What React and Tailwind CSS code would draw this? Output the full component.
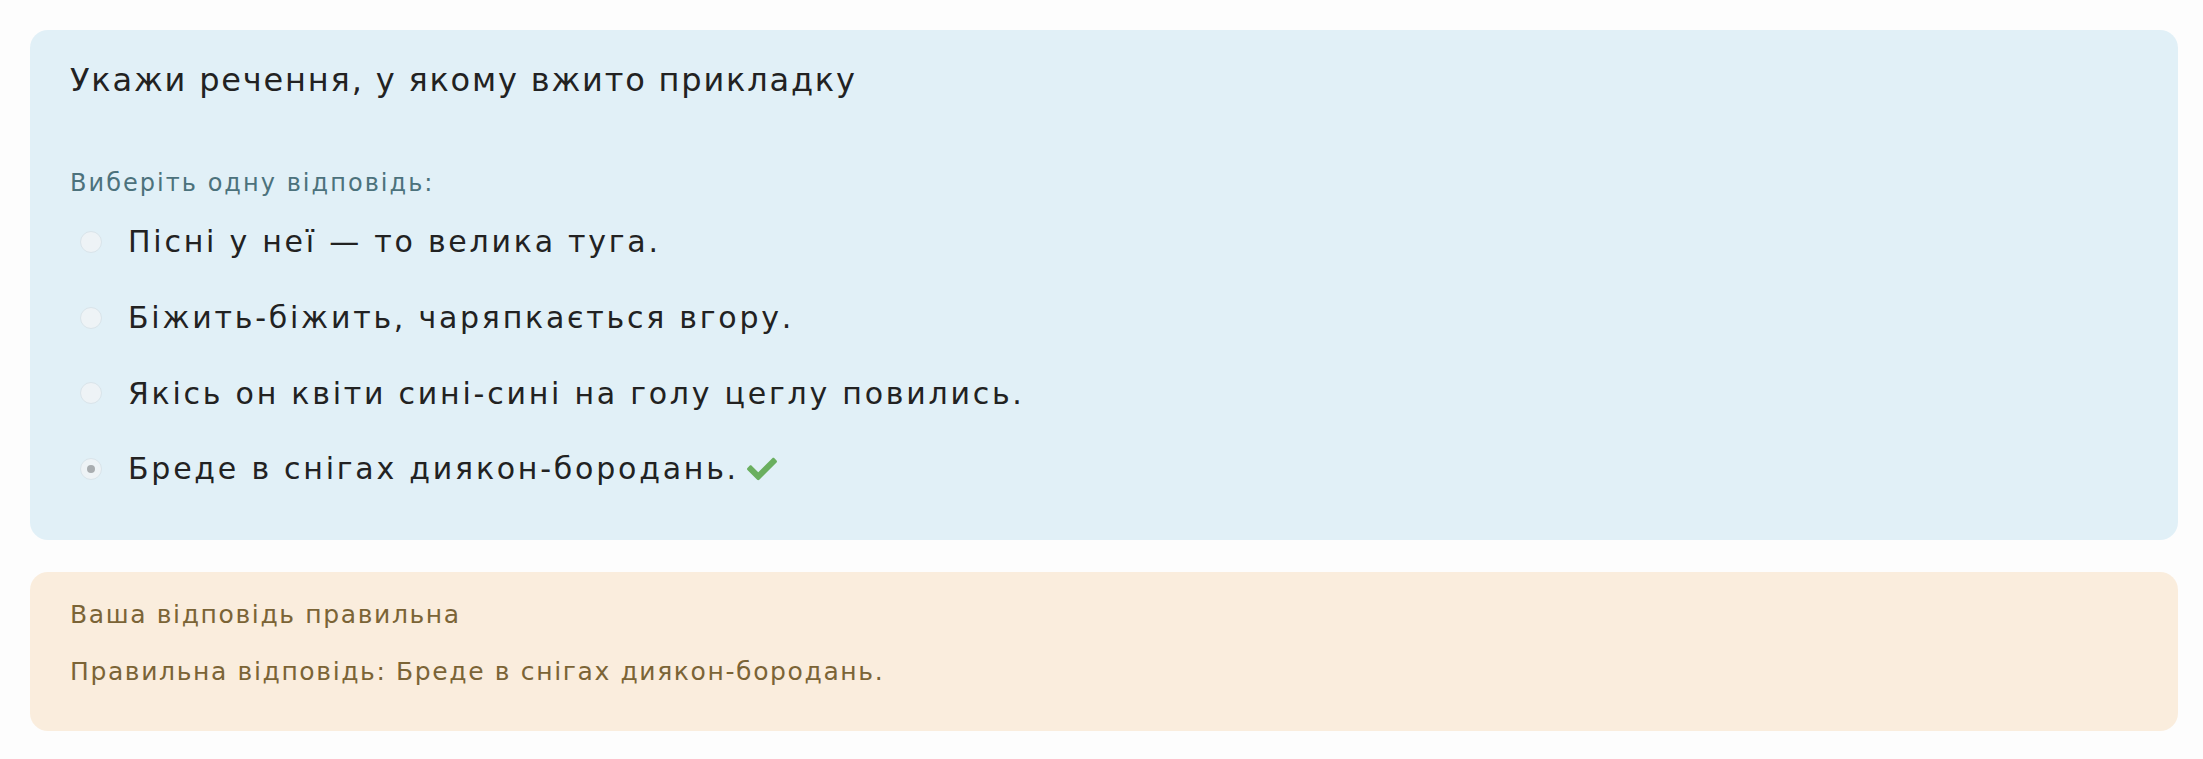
import React from 'react'
import { FaCheck } from 'react-icons/fa'

const options = [
  { text: 'Пісні у неї — то велика туга.' },
  { text: 'Біжить-біжить, чаряпкається вгору.' },
  { text: 'Якісь он квіти сині-сині на голу цеглу повились.' },
  { text: 'Бреде в снігах диякон-бородань.', checked: true, correct: true },
]

function Radio({ checked }) {
  return (
    <span className="w-[22px] h-[22px] rounded-full bg-[#eef3f6] border border-[#d9e4ea] flex items-center justify-center shrink-0">
      {checked && <span className="w-[8px] h-[8px] rounded-full bg-[#a9adb0]" />}
    </span>
  )
}

export default function App() {
  return (
    <div className="min-h-screen bg-[#fdfdfd] pt-[30px] pl-[30px] pr-[25px] font-['DejaVu_Sans','Noto_Sans',sans-serif]">
      {/* Question card */}
      <div className="bg-[#e1f0f7] rounded-[18px] pt-[60px] pb-[33px] pl-[40px]">
        <h2 className="text-[32px] leading-[40px] tracking-[0.057em] text-[#222] -mt-[30px]">
          Укажи речення, у якому вжито прикладку
        </h2>
        <p className="mt-[68px] text-[24px] leading-[30px] tracking-[0.085em] text-[#4c727c]">Виберіть одну відповідь:</p>
        <div className="mt-[6px] flex flex-col">
          {options.map((o) => (
            <label key={o.text} className="h-[75.7px] flex items-center pl-[10px]">
              <Radio checked={o.checked} />
              <span className="ml-[26px] text-[30px] tracking-[0.092em] text-[#222]">{o.text}</span>
              {o.correct && <FaCheck size={30} className="ml-[8px] text-[#6aaf5f]" />}
            </label>
          ))}
        </div>
      </div>

      {/* Feedback */}
      <div className="mt-[32px] bg-[#faeddd] rounded-[18px] pt-[27px] pb-[43px] pl-[40px] text-[25px] leading-[32px] tracking-[0.065em] text-[#7b6436]">
        <p>Ваша відповідь правильна</p>
        <p className="mt-[25px]">Правильна відповідь: Бреде в снігах диякон-бородань.</p>
      </div>
    </div>
  )
}
